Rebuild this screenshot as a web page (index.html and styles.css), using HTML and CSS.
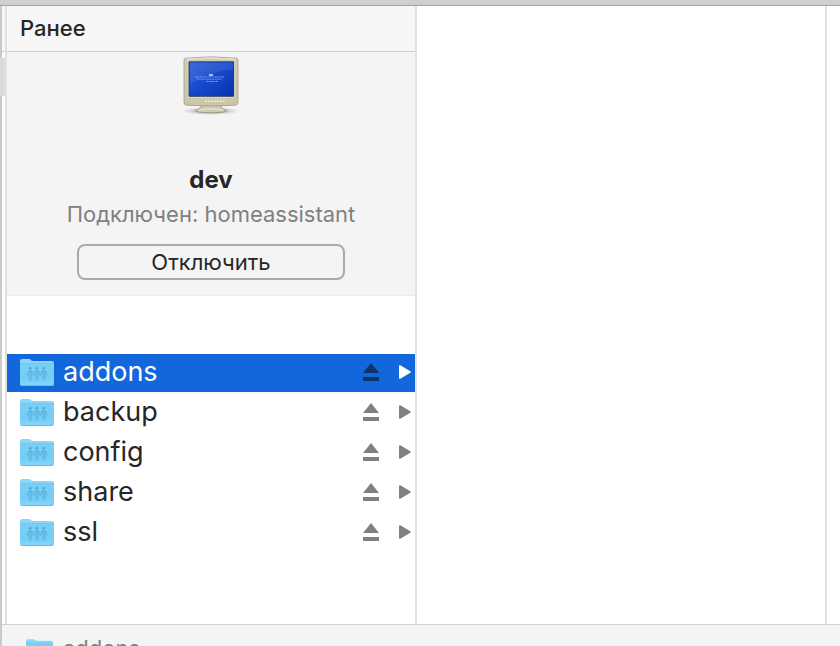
FILE: index.html
```html
<!DOCTYPE html>
<html lang="ru">
<head>
    <meta charset="UTF-8">
    <meta name="viewport" content="width=device-width, initial-scale=1.0">
    <title>dev</title>
    <link rel="stylesheet" href="styles.css">
</head>
<body>

    <!-- Shared icons -->
    <svg class="sprite" aria-hidden="true">
        <defs>
            <linearGradient id="folder-front" x1="0" y1="0" x2="0" y2="1">
                <stop offset="0" stop-color="#79cff6"/>
                <stop offset="0.600" stop-color="#74cdf7"/>
                <stop offset="1" stop-color="#86d4f8"/>
            </linearGradient>
            <symbol id="folder" viewBox="0 0 34 27">
                <path d="M0 2a2 2 0 0 1 2-2h7c2 0 2 2 4 2h19a2 2 0 0 1 2 2v4H0z" fill="#8fd7f7"/>
                <path d="M0 5h34v20a2 2 0 0 1-2 2H2a2 2 0 0 1-2-2z" fill="url(#folder-front)"/>
                <path d="M0 4.500h34" stroke="#68bfe8" stroke-width="0.700"/>
                <path d="M1 26.500h32" stroke="#6bc0e6"/>
                <g fill="#4fa9d6">
                    <circle cx="10.200" cy="9.300" r="1.300"/>
                    <circle cx="17" cy="9.300" r="1.300"/>
                    <circle cx="23.800" cy="9.300" r="1.300"/>
                </g>
                <g fill="none" stroke="#4fa9d6" stroke-width="0.800">
                    <path d="M6.900 16.500L8.900 11.800h2.600l2.100 4.700 2.100-4.700h2.600l2.100 4.700 2.100-4.700h2.600l2 4.700"/>
                    <path d="M9.300 12v9.500M11.100 12v9.500M16.100 12v9.500M17.900 12v9.500M22.900 12v9.500M24.700 12v9.500"/>
                </g>
            </symbol>
            <symbol id="eject" viewBox="0 0 16 18">
                <path d="M8 0l8 10H0z"/>
                <path d="M0 14h16v4H0z"/>
            </symbol>
            <symbol id="arrow" viewBox="0 0 12 14">
                <path d="M0 1.200Q0-.3 1.300.3L11.300 6.200Q12.500 7 11.300 7.800L1.300 13.700Q0 14.300 0 12.800z"/>
            </symbol>
        </defs>
    </svg>

    <div class="window">
        <div class="toolbar-edge"></div>

        <div class="browser">
            <!-- Visible edge of the sidebar -->
            <div class="sidebar">
                <div class="sidebar-head"></div>
                <div class="scroll-thumb"></div>
            </div>

            <!-- Server and its shares -->
            <main class="column">
                <h2 class="column-title">Ранее</h2>

                <section class="server">
                    <svg class="monitor" viewBox="0 0 60 60" aria-hidden="true">
                        <defs>
                            <linearGradient id="screen" x1="0" y1="0" x2="1" y2="1">
                                <stop offset="0" stop-color="#2a5fd6"/>
                                <stop offset="0.500" stop-color="#1648cc"/>
                                <stop offset="1" stop-color="#0930ac"/>
                            </linearGradient>
                            <linearGradient id="case" x1="0" y1="0" x2="0" y2="1">
                                <stop offset="0" stop-color="#d2ceb5"/>
                                <stop offset="1" stop-color="#cbc6aa"/>
                            </linearGradient>
                            <radialGradient id="shadow">
                                <stop offset="0" stop-color="#555" stop-opacity="0.700"/>
                                <stop offset="1" stop-color="#777" stop-opacity="0"/>
                            </radialGradient>
                        </defs>
                        <ellipse cx="30" cy="56" rx="29" ry="4" fill="url(#shadow)"/>
                        <path d="M20 50h20c0 3 2 4 6 5.500-1 3-31 3-32 0 4-1.500 6-2.500 6-5.500z" fill="#cfcbb2" stroke="#8e8a73" stroke-width="0.800"/>
                        <path d="M17 55.500c5-2 21-2 26 0" fill="none" stroke="#ebe8d6"/>
                        <path d="M5 3.200Q30 0.500 55 3.200 57 3.400 57 5V47.500Q57 50 54 50.300 30 51.500 6 50.300 3 50 3 47.500V5Q3 3.400 5 3.200z" fill="url(#case)" stroke="#a19d86" stroke-width="0.800"/>
                        <path d="M5 4.200Q30 1.500 55 4.200" fill="none" stroke="#eeebda"/>
                        <path d="M7 6h46v36.500H7z" fill="#eeeacb"/>
                        <path d="M8 6.800h44.500v34.500H8z" fill="url(#screen)" stroke="#233158" stroke-width="0.900"/>
                        <path d="M9 7.500h43v7Q29 16 9 29z" fill="#fff" opacity="0.080"/>
                        <path d="M28 20h4" stroke="#dce6ff" stroke-width="1.500"/>
                        <g stroke="#8ba8ef" stroke-width="0.800" stroke-dasharray="2 0.500">
                            <path d="M14 22h29M16 24.200h25M25 26.500h12"/>
                        </g>
                        <path d="M24 46.500h20" stroke="#f5f3e5" stroke-width="2" stroke-dasharray="1.500 1.500"/>
                        <path d="M24 48h20" stroke="#b0ac94" stroke-width="0.600" stroke-dasharray="1.500 1.500"/>
                    </svg>
                    <h1 class="server-name">dev</h1>
                    <p class="server-status">Подключен: homeassistant</p>
                    <button class="disconnect" type="button">Отключить</button>
                </section>

                <ul class="shares">
                    <li class="share selected">
                        <svg class="folder"><use href="#folder"/></svg>
                        <a class="share-name" href="#">addons</a>
                        <button class="eject" type="button" aria-label="Извлечь addons"><svg><use href="#eject"/></svg></button>
                        <svg class="arrow"><use href="#arrow"/></svg>
                    </li>
                    <li class="share">
                        <svg class="folder"><use href="#folder"/></svg>
                        <a class="share-name" href="#">backup</a>
                        <button class="eject" type="button" aria-label="Извлечь backup"><svg><use href="#eject"/></svg></button>
                        <svg class="arrow"><use href="#arrow"/></svg>
                    </li>
                    <li class="share">
                        <svg class="folder"><use href="#folder"/></svg>
                        <a class="share-name" href="#">config</a>
                        <button class="eject" type="button" aria-label="Извлечь config"><svg><use href="#eject"/></svg></button>
                        <svg class="arrow"><use href="#arrow"/></svg>
                    </li>
                    <li class="share">
                        <svg class="folder"><use href="#folder"/></svg>
                        <a class="share-name" href="#">share</a>
                        <button class="eject" type="button" aria-label="Извлечь share"><svg><use href="#eject"/></svg></button>
                        <svg class="arrow"><use href="#arrow"/></svg>
                    </li>
                    <li class="share">
                        <svg class="folder"><use href="#folder"/></svg>
                        <a class="share-name" href="#">ssl</a>
                        <button class="eject" type="button" aria-label="Извлечь ssl"><svg><use href="#eject"/></svg></button>
                        <svg class="arrow"><use href="#arrow"/></svg>
                    </li>
                </ul>
            </main>

            <div class="column"></div>
            <div class="column-rest"></div>
        </div>

        <!-- Path bar -->
        <footer class="path-bar">
            <svg class="path-folder"><use href="#folder"/></svg>
            <span>addons</span>
        </footer>
    </div>

</body>
</html>
```
FILE: styles.css
```css
/* General Reset */
* {
    box-sizing: border-box;
    margin: 0;
    padding: 0;
}

body {
    font-family: Inter, "Noto Sans", sans-serif;
    font-size: 22px;
    line-height: 28px;
    color: #262626;
    background: #fff;
    overflow: hidden;
}

button {
    font: inherit;
    color: inherit;
    background: none;
    border: none;
}

svg {
    display: block;
    flex-shrink: 0;
}

.sprite {
    position: absolute;
    width: 0;
    height: 0;
}

/* Window */
.window {
    display: flex;
    flex-direction: column;
    height: 100vh;
    border-left: 2px solid #cacaca;
}

.toolbar-edge {
    height: 6px;
    margin-left: -2px;
    background: #cfcfcf;
    border-bottom: 1px solid #a3a3a3;
    flex-shrink: 0;
}

.browser {
    display: flex;
    flex: 1;
    min-height: 0;
}

/* Sidebar */
.sidebar {
    width: 5px;
    border-right: 2px solid #e1e1e1;
    flex-shrink: 0;
}

.sidebar-head {
    height: 46px;
    background: #f6f6f6;
    border-bottom: 1px solid #d0d0d0;
}

.scroll-thumb {
    height: 38px;
    margin-top: 6px;
    margin-left: -2px;
    background: #dadada;
}

/* Columns */
.column {
    width: calc(50% - 9px);
    border-right: 2px solid #e1e1e1;
    flex-shrink: 0;
}

.column-rest {
    flex: 1;
}

.column-title {
    height: 46px;
    padding: 8px 13px;
    font-size: 22px;
    font-weight: 500;
    background: #f6f6f6;
    border-bottom: 1px solid #d0d0d0;
}

/* Server panel */
.server {
    display: flex;
    flex-direction: column;
    align-items: center;
    padding: 3px 20px 15px;
    background: #f4f4f4;
    border-bottom: 1px solid #ececec;
}

.monitor {
    width: 60px;
    height: 60px;
}

.server-name {
    margin-top: 51px;
    font-size: 24px;
    font-weight: 700;
}

.server-status {
    margin-top: 6px;
    color: #808080;
}

.disconnect {
    width: 268px;
    margin-top: 16px;
    padding: 2px;
    line-height: 28px;
    border: 2px solid #aaa;
    border-radius: 8px;
}

/* Shares list */
.shares {
    display: flex;
    flex-direction: column;
    gap: 2px;
    margin-top: 58px;
    list-style: none;
}

.share {
    display: flex;
    align-items: center;
    height: 38px;
    padding: 0 4px 2px 13px;
    font-size: 27px;
    line-height: 36px;
    color: #262626;
}

.folder {
    width: 34px;
    height: 27px;
}

.share-name {
    flex: 1;
    margin-left: 9px;
    color: inherit;
    text-decoration: none;
}

.eject svg {
    width: 16px;
    height: 18px;
    fill: #808080;
}

.arrow {
    width: 12px;
    height: 14px;
    margin-left: 20px;
    fill: #808080;
}

.selected {
    color: #fff;
    background: #1267db;
}

.selected .eject svg {
    fill: #0b3468;
}

.selected .arrow {
    fill: #fff;
}

/* Path bar */
.path-bar {
    display: flex;
    gap: 10px;
    height: 22px;
    padding: 14px 24px 0;
    line-height: 18px;
    color: #808080;
    background: #f4f4f4;
    border-top: 1px solid #cfcfcf;
    overflow: hidden;
    flex-shrink: 0;
}

.path-folder {
    width: 27px;
    height: 22px;
}
```
